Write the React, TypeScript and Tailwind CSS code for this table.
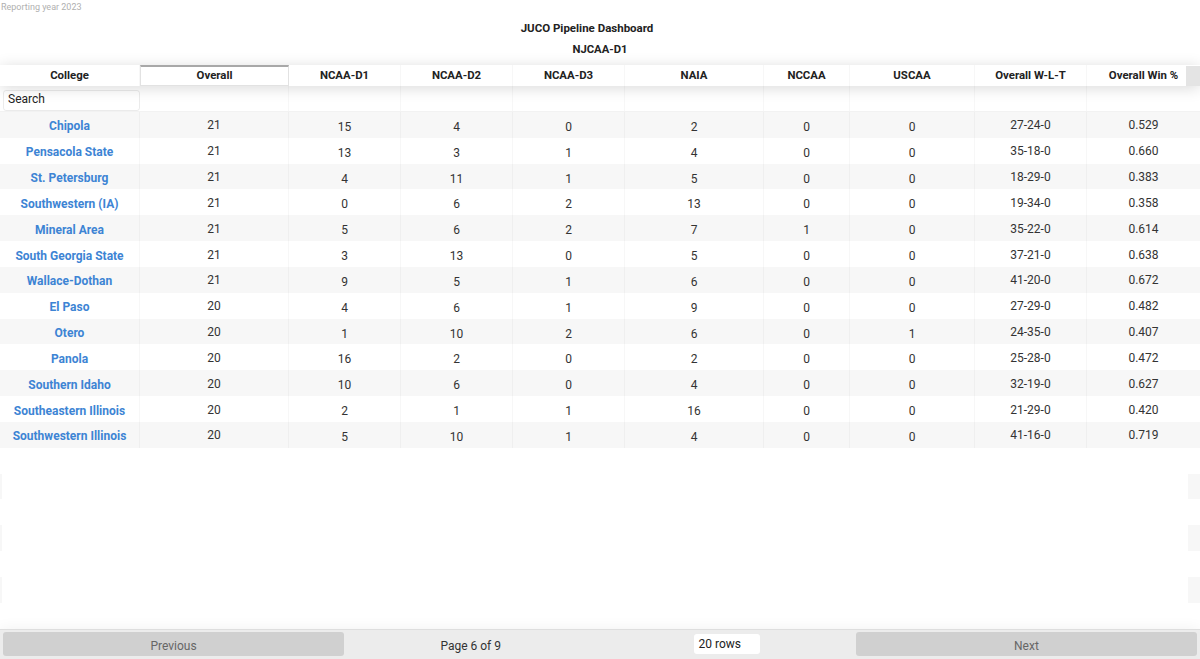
import React from "react";

type Row = {
  college: string;
  overall: number;
  d1: number;
  d2: number;
  d3: number;
  naia: number;
  nccaa: number;
  uscaa: number;
  wlt: string;
  pct: string;
};

const ROWS: Row[] = [
  { college: "Chipola", overall: 21, d1: 15, d2: 4, d3: 0, naia: 2, nccaa: 0, uscaa: 0, wlt: "27-24-0", pct: "0.529" },
  { college: "Pensacola State", overall: 21, d1: 13, d2: 3, d3: 1, naia: 4, nccaa: 0, uscaa: 0, wlt: "35-18-0", pct: "0.660" },
  { college: "St. Petersburg", overall: 21, d1: 4, d2: 11, d3: 1, naia: 5, nccaa: 0, uscaa: 0, wlt: "18-29-0", pct: "0.383" },
  { college: "Southwestern (IA)", overall: 21, d1: 0, d2: 6, d3: 2, naia: 13, nccaa: 0, uscaa: 0, wlt: "19-34-0", pct: "0.358" },
  { college: "Mineral Area", overall: 21, d1: 5, d2: 6, d3: 2, naia: 7, nccaa: 1, uscaa: 0, wlt: "35-22-0", pct: "0.614" },
  { college: "South Georgia State", overall: 21, d1: 3, d2: 13, d3: 0, naia: 5, nccaa: 0, uscaa: 0, wlt: "37-21-0", pct: "0.638" },
  { college: "Wallace-Dothan", overall: 21, d1: 9, d2: 5, d3: 1, naia: 6, nccaa: 0, uscaa: 0, wlt: "41-20-0", pct: "0.672" },
  { college: "El Paso", overall: 20, d1: 4, d2: 6, d3: 1, naia: 9, nccaa: 0, uscaa: 0, wlt: "27-29-0", pct: "0.482" },
  { college: "Otero", overall: 20, d1: 1, d2: 10, d3: 2, naia: 6, nccaa: 0, uscaa: 1, wlt: "24-35-0", pct: "0.407" },
  { college: "Panola", overall: 20, d1: 16, d2: 2, d3: 0, naia: 2, nccaa: 0, uscaa: 0, wlt: "25-28-0", pct: "0.472" },
  { college: "Southern Idaho", overall: 20, d1: 10, d2: 6, d3: 0, naia: 4, nccaa: 0, uscaa: 0, wlt: "32-19-0", pct: "0.627" },
  { college: "Southeastern Illinois", overall: 20, d1: 2, d2: 1, d3: 1, naia: 16, nccaa: 0, uscaa: 0, wlt: "21-29-0", pct: "0.420" },
  { college: "Southwestern Illinois", overall: 20, d1: 5, d2: 10, d3: 1, naia: 4, nccaa: 0, uscaa: 0, wlt: "41-16-0", pct: "0.719" },
];

// column widths in px, sum = 1200
const COLS = [
  { label: "College", w: "w-[140px]" },
  { label: "Overall", w: "w-[149px]" },
  { label: "NCAA-D1", w: "w-[112px]" },
  { label: "NCAA-D2", w: "w-[112px]" },
  { label: "NCAA-D3", w: "w-[112px]" },
  { label: "NAIA", w: "w-[139px]" },
  { label: "NCCAA", w: "w-[86px]" },
  { label: "USCAA", w: "w-[125px]" },
  { label: "Overall W-L-T", w: "w-[112px]" },
  { label: "Overall Win %", w: "w-[113px]" },
];

const cellBorder = "border-r border-r-[rgba(0,0,0,0.03)]";

export default function App() {
  return (
    <div className="w-[1200px] h-[659px] overflow-hidden bg-white font-['Roboto',sans-serif] text-[#333] flex flex-col">
      <div className="h-[14px] text-[9px] leading-[14px] text-[#b0b0b0] pl-[1px]">Reporting year 2023</div>
      <div className="mt-[7px] text-center text-[11.5px] leading-[14px] font-bold text-[#222] pr-[26px]">
        JUCO Pipeline Dashboard
      </div>
      <div className="mt-[8px] text-center text-[11.3px] leading-[14px] font-bold text-[#222]">NJCAA-D1</div>

      {/* header */}
      <div className="relative mt-[8px] flex h-[21px] shadow-[0_2px_15px_0_rgba(0,0,0,0.15)] z-10 bg-white">
        {COLS.map((c, i) => (
          <div
            key={c.label}
            className={`${c.w} shrink-0 flex items-center justify-center text-[11.4px] font-bold text-[#222] ${
              i === 1
                ? "border border-[#e2e2e2] border-t-2 border-t-[#a8a8a8]"
                : `pt-[1px] ${i < COLS.length - 1 ? cellBorder : ""}`
            }`}
          >
            {c.label}
          </div>
        ))}
        <div className="absolute right-0 top-[1px] w-[14px] h-[20px] bg-[#e4e4e4]" />
      </div>

      {/* filter row */}
      <div className="flex h-[26px] border-b border-b-[rgba(0,0,0,0.05)]">
        <div className="w-[140px] shrink-0 pl-[3px] pt-0">
          <input
            readOnly
            placeholder="Search"
            className="w-full h-[21px] px-[4px] pb-[3px] text-[12px] border border-[rgba(0,0,0,0.08)] rounded-[3px] placeholder:text-[#222] outline-none"
          />
        </div>
        {COLS.slice(1).map((c, i) => (
          <div key={c.label} className={`${c.w} shrink-0 ${i < COLS.length - 2 ? cellBorder : ""}`} />
        ))}
      </div>

      {/* body */}
      <div className="flex flex-col">
        {ROWS.map((r, idx) => {
          const vals = [r.overall, r.d1, r.d2, r.d3, r.naia, r.nccaa, r.uscaa, r.wlt, r.pct];
          return (
            <div
              key={r.college}
              className={`flex h-[25.83px] items-center ${idx % 2 === 0 ? "bg-[#f7f7f7]" : "bg-white"}`}
            >
              <div className={`w-[140px] shrink-0 h-full flex items-center justify-center pt-[3px] text-[12px] font-bold text-[#3d84d4] ${cellBorder}`}>
                {r.college}
              </div>
              {vals.map((v, i) => (
                <div
                  key={i}
                  className={`${COLS[i + 1].w} shrink-0 h-full flex items-center justify-center text-[12px] ${
                    i === 0 || i >= 7 ? "pt-[1px]" : "pt-[4px]"
                  } ${i < vals.length - 1 ? cellBorder : ""}`}
                >
                  {v}
                </div>
              ))}
            </div>
          );
        })}
        {Array.from({ length: 7 }).map((_, i) => (
          <div key={i} className={`h-[25.83px] ${i % 2 === 1 ? "bg-[#f7f7f7] px-[2px] pr-[12px]" : "bg-white"}`}>
            <div className="h-full bg-white" />
          </div>
        ))}
      </div>

      {/* pagination */}
      <div className="flex-1 flex items-center gap-0 px-[3px] bg-[#ececec] border-t border-t-[rgba(0,0,0,0.06)] shadow-[0_0_15px_0_rgba(0,0,0,0.06)]">
        <button className="flex-1 h-[24px] pt-[3px] rounded-[3px] bg-[#d0d0d0] text-[12px] text-[#666]">Previous</button>
        <div className="flex-[1.5] flex items-center justify-around text-[12px] text-[#333]">
          <span className="pt-[4px]">Page 6 of 9</span>
          <span className="w-[66px] h-[20px] bg-white rounded-[3px] pl-[5px] pt-[2px] leading-[17px] text-[12px] text-[#222]">20 rows</span>
        </div>
        <button className="flex-1 h-[24px] pt-[3px] rounded-[3px] bg-[#d0d0d0] text-[12px] text-[#666]">Next</button>
      </div>
    </div>
  );
}
